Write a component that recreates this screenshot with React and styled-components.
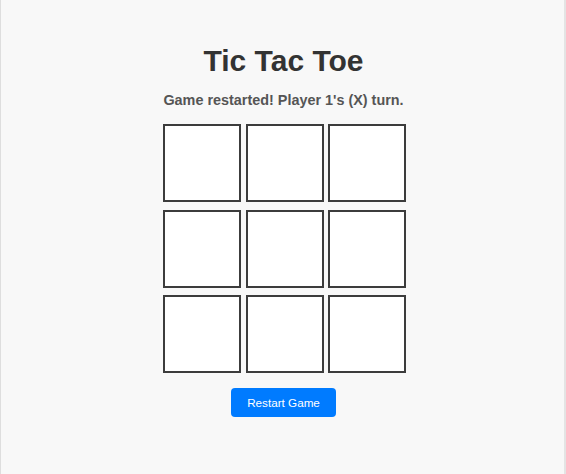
import React, { useState } from 'react';
import styled, { createGlobalStyle } from 'styled-components';

const GlobalStyle = createGlobalStyle`
  html, body {
    margin: 0;
    padding: 0;
    height: 100%;
  }
  body {
    background: #f8f8f8;
    font-family: "Liberation Sans", Arial, sans-serif;
  }
  #root {
    height: 100%;
  }
`;

const Page = styled.div`
  box-sizing: border-box;
  min-height: 100vh;
  display: flex;
  flex-direction: column;
  align-items: center;
  padding: 44px 0 0 2px;
  border-left: 1px solid #dedede;
  border-right: 2px solid #e4e4e4;
`;

const Title = styled.h1`
  margin: 0;
  font-size: 30px;
  line-height: 34px;
  font-weight: bold;
  color: #333;
`;

const Status = styled.p`
  margin: 14px 0 0;
  font-size: 14.4px;
  line-height: 17px;
  font-weight: bold;
  color: #555;
`;

const Board = styled.div`
  display: grid;
  grid-template-columns: repeat(3, 78px);
  grid-auto-rows: 78px;
  column-gap: 4.5px;
  row-gap: 7.5px;
  margin: 15px 0 0 2px;
`;

const Cell = styled.button`
  box-sizing: border-box;
  width: 78px;
  height: 78px;
  padding: 0;
  background: #fff;
  border: 2px solid #3c3c3c;
  font-family: inherit;
  font-size: 40px;
  font-weight: bold;
  color: ${(p) => (p.mark === 'X' ? '#e74c3c' : '#3498db')};
  cursor: pointer;
`;

const RestartButton = styled.button`
  margin-top: 15px;
  height: 29px;
  padding: 0 16px;
  border: none;
  border-radius: 4px;
  background: #007bff;
  color: #fff;
  font-family: inherit;
  font-size: 11.7px;
  cursor: pointer;
`;

const empty = () => Array(9).fill(null);

const App = () => {
  const [cells, setCells] = useState(empty());
  const [xTurn, setXTurn] = useState(true);
  const [status, setStatus] = useState("Game restarted! Player 1's (X) turn.");

  const play = (i) => {
    if (cells[i]) return;
    const next = [...cells];
    next[i] = xTurn ? 'X' : 'O';
    setCells(next);
    setXTurn(!xTurn);
    setStatus(xTurn ? "Player 2's (O) turn." : "Player 1's (X) turn.");
  };

  const restart = () => {
    setCells(empty());
    setXTurn(true);
    setStatus("Game restarted! Player 1's (X) turn.");
  };

  return (
    <Page>
      <GlobalStyle />
      <Title>Tic Tac Toe</Title>
      <Status>{status}</Status>
      <Board>
        {cells.map((c, i) => (
          <Cell key={i} mark={c} onClick={() => play(i)}>
            {c}
          </Cell>
        ))}
      </Board>
      <RestartButton onClick={restart}>Restart Game</RestartButton>
    </Page>
  );
};

export default App;
